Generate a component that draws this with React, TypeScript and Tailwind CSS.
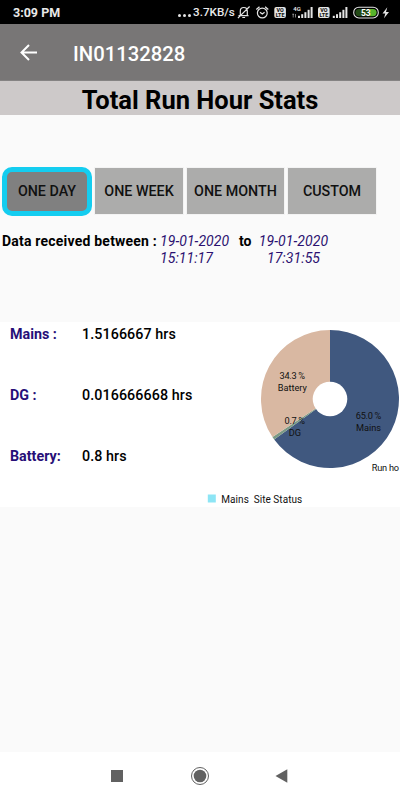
import React from 'react';

const ranges = [
  { label: 'ONE WEEK', box: 'ml-[3px] w-[88px]' },
  { label: 'ONE MONTH', box: 'ml-[4px] w-[97px]' },
  { label: 'CUSTOM', box: 'ml-[4px] w-[88px]' },
];

const stats = [
  { label: 'Mains :', value: '1.5166667 hrs' },
  { label: 'DG :', value: '0.016666668 hrs' },
  { label: 'Battery:', value: '0.8 hrs' },
];

const slices = [
  { name: 'Mains', from: 0, to: 234, color: '#40587f' },
  { name: 'DG', from: 234, to: 236.5, color: '#7c9a84' },
  { name: 'Battery', from: 236.5, to: 360, color: '#d9b8a2' },
];

const sliceLabels = [
  { name: 'Battery', percent: '34.3 %', x: 92.3, y: 57 },
  { name: 'DG', percent: '0.7 %', x: 94.8, y: 101.8 },
  { name: 'Mains', percent: '65.0 %', x: 168.5, y: 97 },
];

const CX = 130;
const CY = 77;
const R = 69;

function slicePath(from: number, to: number) {
  const point = (deg: number) => {
    const a = ((deg - 90) * Math.PI) / 180;
    return `${CX + R * Math.cos(a)} ${CY + R * Math.sin(a)}`;
  };
  const large = to - from > 180 ? 1 : 0;
  return `M${CX} ${CY}L${point(from)}A${R} ${R} 0 ${large} 1 ${point(to)}Z`;
}

function StatusIcons() {
  return (
    <svg className="absolute left-[236px] top-0" width="164" height="24" viewBox="236 0 164 24" fill="none" stroke="#e4e4e4">
      {/* muted bell */}
      <path d="M238.5 15.6h10M240.3 15.3v-4.2c0-2.2 1.5-3.6 3.5-3.6s3.5 1.4 3.5 3.6v4.2M242.3 17.5h2.8M237.9 18.2 249.6 6.5" strokeWidth="1.2" />
      {/* alarm */}
      <circle cx="262.3" cy="13" r="4.9" strokeWidth="1.2" />
      <path d="M256.3 9.5 259.5 6.8M268.3 9.5 265.1 6.8M260 12.3 262.3 14 264.6 12.3" strokeWidth="1.3" />
      {/* VoLTE badges */}
      {[274.3, 318].map((x) => (
        <g key={x} stroke="none">
          <rect x={x} y="7" width="11.6" height="11" rx="2" fill="#e4e4e4" />
          <text x={x + 5.8} y="12.2" fill="#111" fontSize="5.4" fontWeight="800" textAnchor="middle">VO</text>
          <text x={x + 5.8} y="17" fill="#111" fontSize="5.4" fontWeight="800" textAnchor="middle">LTE</text>
        </g>
      ))}
      <text x="293.3" y="10.5" fill="#e4e4e4" stroke="none" fontSize="6" fontWeight="600">4G</text>
      <path d="M292.3 14.2h1.8M293.2 14v3.5M295.5 14v3.5" strokeWidth="0.8" opacity="0.7" />
      {[298, 332.8].map((x) => (
        <g key={x} fill="#e4e4e4" stroke="none">
          <rect x={x} y="15.8" width="2" height="2.2" />
          <rect x={x + 3.2} y="14.2" width="2" height="3.8" />
          <rect x={x + 6.4} y="12.2" width="2" height="5.8" />
          <rect x={x + 9.6} y="9.8" width="2" height="8.2" />
          <rect x={x + 12.6} y="7" width="2" height="11" />
        </g>
      ))}
      {/* battery */}
      <rect x="353.7" y="7.2" width="24.6" height="10.8" rx="5.2" strokeWidth="1.1" />
      <path d="M370 9h3a3.6 3.6 0 0 1 0 7.2h-3z" fill="#58b52c" stroke="none" />
      <path d="M370 9h-11a3.6 3.6 0 0 0 0 7.2h11z" fill="#234a16" stroke="none" />
      <text x="365.8" y="15.7" fill="#fff" stroke="none" fontSize="8.5" fontWeight="700" textAnchor="middle">53</text>
      <path d="M387.3 7.3 382.5 13.5h2.8L384 18.2 389 11.9h-3z" fill="#e4e4e4" stroke="none" />
    </svg>
  );
}

function RunHourChart() {
  return (
    <svg className="shrink-0" width="200" height="185" viewBox="0 0 200 185" fill="#111">
      {slices.map((s) => (
        <path key={s.name} d={slicePath(s.from, s.to)} fill={s.color} />
      ))}
      <circle cx={CX} cy={CY} r="17.3" fill="#fff" />
      <g fontSize="9.2" textAnchor="middle">
        {sliceLabels.map((l) => (
          <g key={l.name}>
            <text x={l.x} y={l.y} textLength={l.name === 'DG' ? 20.5 : 25.5}>{l.percent}</text>
            <text x={l.x} y={l.y + 11.7}>{l.name}</text>
          </g>
        ))}
      </g>
      <text x="171.8" y="149" fontSize="9.2" textLength="27.2">Run ho</text>
      <rect x="7.8" y="172.5" width="8" height="8" fill="#8de5f5" />
      <text x="21.3" y="180.6" fontSize="10" textLength="27.5">Mains</text>
      <text x="53.7" y="180.6" fontSize="10" textLength="48.5">Site Status</text>
    </svg>
  );
}

export default function App() {
  return (
    <div className="flex h-[800px] w-[400px] flex-col overflow-hidden bg-[#fafafa] font-['Roboto',sans-serif] text-black">
      {/* status bar */}
      <div className="relative flex h-6 shrink-0 items-center bg-black text-[#e8e8e8]">
        <span className="ml-[13px] w-[165px] pt-[2px] text-[12.5px] font-bold leading-none">3:09 PM</span>
        <span className="flex gap-[2px] pt-[7px]">
          <i className="size-[3px] rounded-full bg-[#e4e4e4]" />
          <i className="size-[3px] rounded-full bg-[#e4e4e4]" />
          <i className="size-[3px] rounded-full bg-[#e4e4e4]" />
        </span>
        <span className="ml-[2px] pt-[2px] text-[11.7px] font-medium leading-none">3.7KB/s</span>
        <StatusIcons />
      </div>

      {/* app bar */}
      <header className="flex h-[57px] shrink-0 items-center border-b border-[#858383] bg-[#787676] text-white">
        <svg className="ml-[20px] mt-px w-[17px]" width="17" height="17" viewBox="0 0 17 17" fill="none" stroke="currentColor" strokeWidth="2">
          <path d="M17 8.5H2M9 1 1.5 8.5 9 16" />
        </svg>
        <span className="ml-[36px] pt-[5px] text-[20.3px] font-medium leading-none">IN01132828</span>
      </header>

      <h1 className="h-[34px] shrink-0 bg-[#cdc9c9] text-center text-[25.5px] font-bold leading-[38px]">Total Run Hour Stats</h1>

      {/* range picker */}
      <div className="mt-[52px] flex h-[49px] shrink-0 items-start pl-[2px] text-[14.3px] font-medium text-[#111]">
        <button className="h-[49px] w-[90px] rounded-[10px] border-[5px] border-[#14cdf0] bg-[#808080] pt-px">ONE DAY</button>
        {ranges.map((r) => (
          <button key={r.label} className={`mt-px h-[46px] bg-[#acacab] pt-[2px] outline outline-[#f3f3f3] ${r.box}`}>
            {r.label}
          </button>
        ))}
      </div>

      <div className="mt-[17px] flex h-9 shrink-0 pl-[2px] text-[14px] leading-[17px]">
        <span className="w-[158px] whitespace-nowrap font-bold tracking-[0.21px]">Data received between :</span>
        <span className="w-[79px] italic tracking-[0.06px] text-[#2b1170]">19-01-2020<br />15:11:17</span>
        <span className="w-[19px] font-bold">to</span>
        <span className="w-[71px] text-center italic tracking-[0.08px] text-[#2b1170]">19-01-2020<br />17:31:55</span>
      </div>

      <section className="mt-[53px] flex h-[185px] shrink-0 bg-white">
        <div className="w-[200px] shrink-0 pt-[3px] text-[14.3px] font-medium">
          {stats.map((s) => (
            <div key={s.label} className="flex h-[61px] pl-[10px] leading-[19px]">
              <span className="w-[72px] font-bold text-[#270f78]">{s.label}</span>
              <span className="whitespace-nowrap tracking-[0.08px]">{s.value}</span>
            </div>
          ))}
        </div>
        <RunHourChart />
      </section>

      {/* navigation bar */}
      <nav className="mt-auto flex h-12 shrink-0 items-center bg-white text-[#616161]">
        <svg width="400" height="48" viewBox="0 0 400 48" fill="currentColor">
          <rect x="111" y="18" width="12" height="12" />
          <circle cx="200" cy="24" r="8.5" fill="none" stroke="currentColor" />
          <circle cx="200" cy="24" r="6.3" />
          <path d="M275.5 24 287.3 17.3V30.7Z" />
        </svg>
      </nav>
    </div>
  );
}
